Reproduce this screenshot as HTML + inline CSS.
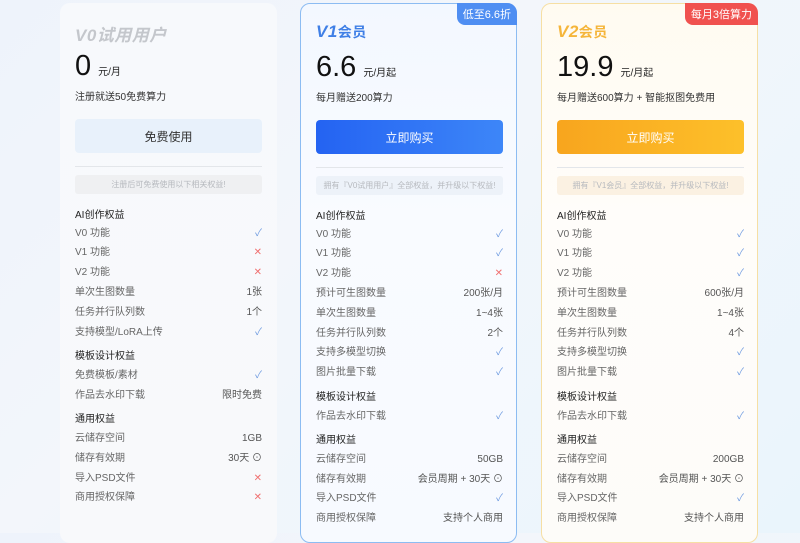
<!DOCTYPE html><html><head><meta charset="utf-8"><style>
*{box-sizing:border-box;margin:0;padding:0}
body{width:800px;height:533px;overflow:hidden;background:linear-gradient(135deg,#eef3fb,#f3f6fb 40%,#eaf5fc);font-family:"Liberation Sans","Noto Sans CJK SC",sans-serif;position:relative}
.card{position:absolute;top:3px;width:217px;height:540px;border-radius:10px;padding:0 14px 0 15px}
.c0{left:60px;background:linear-gradient(#f7f9fc,#f8f9fb);}
.c1{left:300px;background:linear-gradient(#f3f8ff,#f9fbff 40%,#f7faff);border:1px solid #8cbcf2}
.c2{left:541px;background:linear-gradient(#fffbf1,#fffdfa 40%,#fdfcf9);border:1px solid #f6dfa4}
.title{position:absolute;top:18px;font-size:17px;font-weight:bold;font-style:italic;letter-spacing:0.5px}
.price{position:absolute;top:47px;font-size:29px;color:#111;display:flex;align-items:baseline}
.price span{font-size:10px;margin-left:7px;color:#222}
.sub{position:absolute;top:85px;font-size:10px;color:#333}
.btn{position:absolute;top:116px;left:15px;width:187px;height:34px;border-radius:4px;display:flex;align-items:center;justify-content:center;font-size:12px}
.hr{position:absolute;top:163px;left:15px;width:187px;border-top:1px solid #e3e6ea}
.note{position:absolute;top:172px;left:15px;width:187px;height:19px;border-radius:3px;font-size:8px;color:#b6b9be;display:flex;align-items:center;justify-content:center}
.list{position:absolute;top:201px;left:15px;width:187px;font-size:10px;color:#666}
.r{height:19.8px;display:flex;justify-content:space-between;align-items:center;line-height:12px}
.r span{color:#555}
.h{height:19.8px;display:flex;align-items:center;color:#222}
.h2{height:23.5px;display:flex;align-items:flex-end;padding-bottom:4px;color:#222}
.ok{color:#6f9be0;font-size:10px;font-weight:normal}
.no{color:#f07070;font-size:10px;font-weight:normal}
.badge{position:absolute;top:-1px;right:-1px;height:22px;padding:0 6px;border-radius:0 10px 0 8px;color:#fff;font-size:11px;display:flex;align-items:center}
</style></head><body>

<div class="card c0">
<div class="title" style="color:#c4c7cc">V0试用用户</div>
<div class="price">0<span>元/月</span></div>
<div class="sub">注册就送50免费算力</div>
<div class="btn" style="background:#e8f1fb;color:#333">免费使用</div>
<div class="hr"></div>
<div class="note" style="background:#eff0f2">注册后可免费使用以下相关权益!</div>
<div class="list">
<div class="h">AI创作权益</div>
<div class="r">V0 功能<b class="ok">✓</b></div>
<div class="r">V1 功能<b class="no">✕</b></div>
<div class="r">V2 功能<b class="no">✕</b></div>
<div class="r">单次生图数量<span>1张</span></div>
<div class="r">任务并行队列数<span>1个</span></div>
<div class="r">支持模型/LoRA上传<b class="ok">✓</b></div>
<div class="h2">模板设计权益</div>
<div class="r">免费模板/素材<b class="ok">✓</b></div>
<div class="r">作品去水印下载<span>限时免费</span></div>
<div class="h2">通用权益</div>
<div class="r">云储存空间<span>1GB</span></div>
<div class="r">储存有效期<span>30天 ⊙</span></div>
<div class="r">导入PSD文件<b class="no">✕</b></div>
<div class="r">商用授权保障<b class="no">✕</b></div>
</div></div>

<div class="card c1">
<div class="badge" style="background:#4f8ef2">低至6.6折</div>
<div class="title" style="color:#3f7fe6">V1<span style="font-style:normal;font-size:14px">会员</span></div>
<div class="price">6.6<span>元/月起</span></div>
<div class="sub">每月赠送200算力</div>
<div class="btn" style="background:linear-gradient(90deg,#2463f2,#3d86f8);color:#fff">立即购买</div>
<div class="hr"></div>
<div class="note" style="background:#edf2f9">拥有『V0试用用户』全部权益，并升级以下权益!</div>
<div class="list">
<div class="h">AI创作权益</div>
<div class="r">V0 功能<b class="ok">✓</b></div>
<div class="r">V1 功能<b class="ok">✓</b></div>
<div class="r">V2 功能<b class="no">✕</b></div>
<div class="r">预计可生图数量<span>200张/月</span></div>
<div class="r">单次生图数量<span>1~4张</span></div>
<div class="r">任务并行队列数<span>2个</span></div>
<div class="r">支持多模型切换<b class="ok">✓</b></div>
<div class="r">图片批量下载<b class="ok">✓</b></div>
<div class="h2">模板设计权益</div>
<div class="r">作品去水印下载<b class="ok">✓</b></div>
<div class="h2">通用权益</div>
<div class="r">云储存空间<span>50GB</span></div>
<div class="r">储存有效期<span>会员周期 + 30天 ⊙</span></div>
<div class="r">导入PSD文件<b class="ok">✓</b></div>
<div class="r">商用授权保障<span>支持个人商用</span></div>
</div></div>

<div class="card c2">
<div class="badge" style="background:#f0514f">每月3倍算力</div>
<div class="title" style="color:#f5b53a">V2<span style="font-style:normal;font-size:14px">会员</span></div>
<div class="price">19.9<span>元/月起</span></div>
<div class="sub">每月赠送600算力 + 智能抠图免费用</div>
<div class="btn" style="background:linear-gradient(90deg,#f8a51e,#fdc02a);color:#fff">立即购买</div>
<div class="hr"></div>
<div class="note" style="background:#fbf1e2">拥有『V1会员』全部权益，并升级以下权益!</div>
<div class="list">
<div class="h">AI创作权益</div>
<div class="r">V0 功能<b class="ok">✓</b></div>
<div class="r">V1 功能<b class="ok">✓</b></div>
<div class="r">V2 功能<b class="ok">✓</b></div>
<div class="r">预计可生图数量<span>600张/月</span></div>
<div class="r">单次生图数量<span>1~4张</span></div>
<div class="r">任务并行队列数<span>4个</span></div>
<div class="r">支持多模型切换<b class="ok">✓</b></div>
<div class="r">图片批量下载<b class="ok">✓</b></div>
<div class="h2">模板设计权益</div>
<div class="r">作品去水印下载<b class="ok">✓</b></div>
<div class="h2">通用权益</div>
<div class="r">云储存空间<span>200GB</span></div>
<div class="r">储存有效期<span>会员周期 + 30天 ⊙</span></div>
<div class="r">导入PSD文件<b class="ok">✓</b></div>
<div class="r">商用授权保障<span>支持个人商用</span></div>
</div></div>

</body></html>
